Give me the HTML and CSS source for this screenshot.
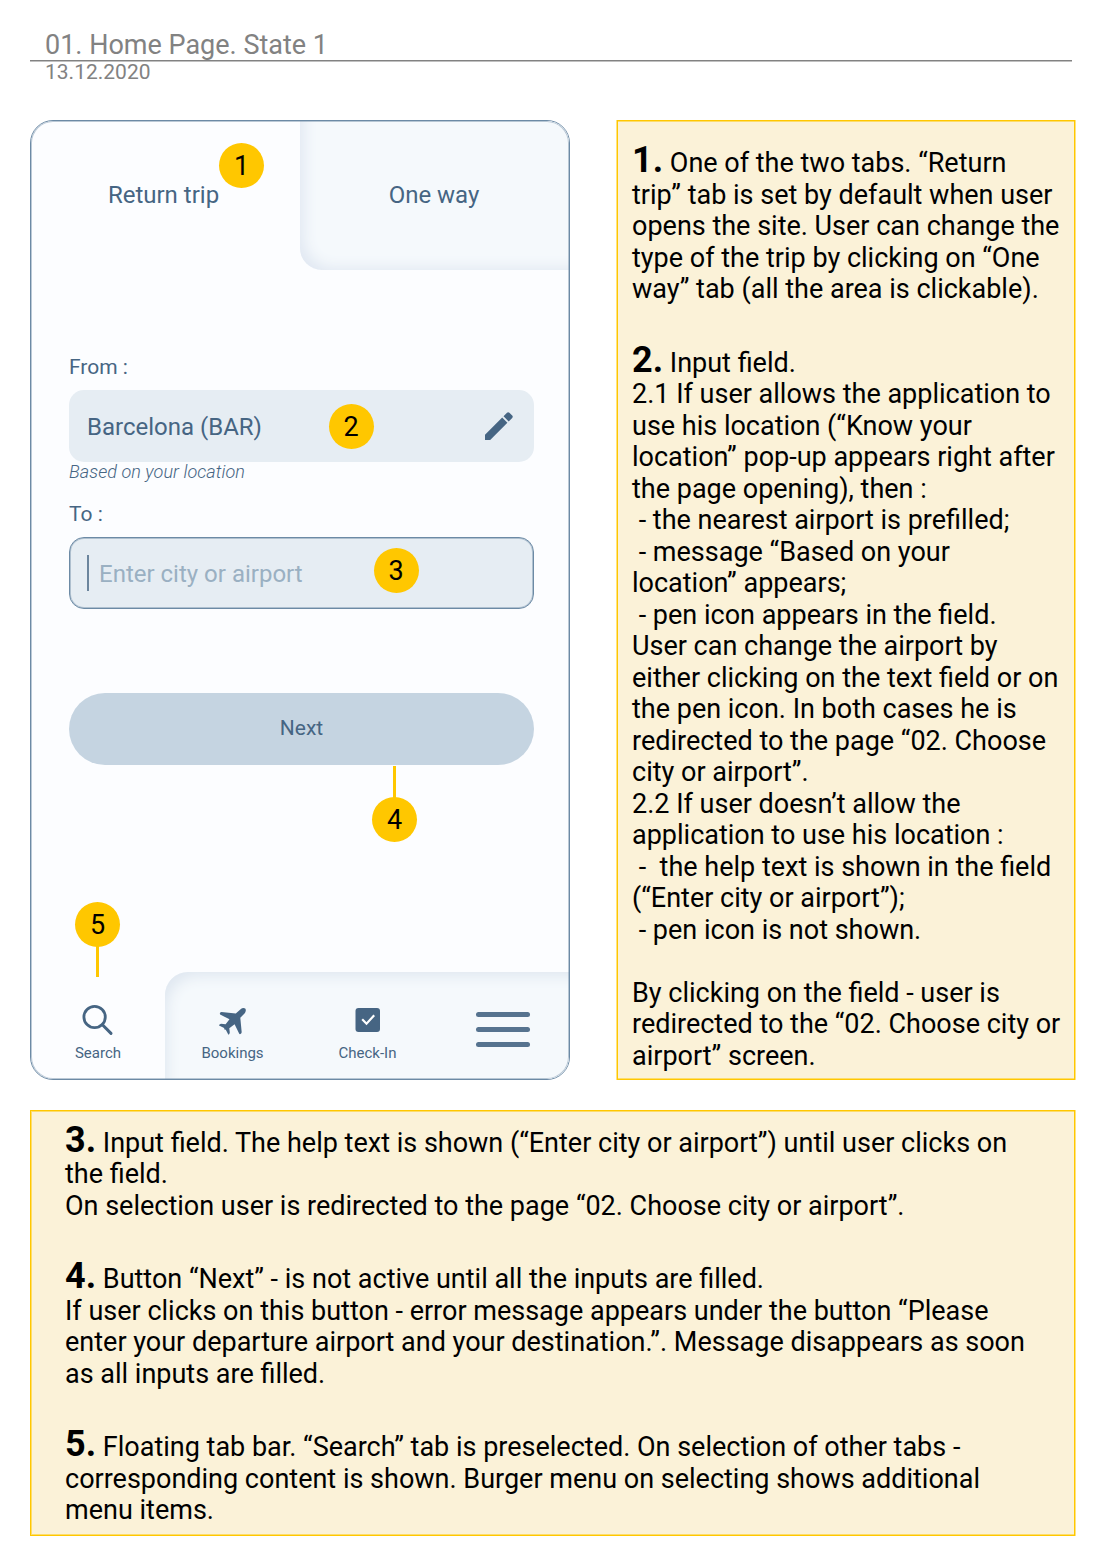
FILE: index.html
```html
<!DOCTYPE html>
<html lang="en">
<head>
<meta charset="utf-8">
<title>01. Home Page. State 1</title>
<link rel="stylesheet" href="styles.css">
</head>
<body>
<main class="sheet">
  <header class="sheet-head">
    <h1 class="title">01. Home Page. State 1</h1>
    <p class="date">13.12.2020</p>
  </header>

  <div class="top-row">
    <section class="phone">
      <nav class="trip-tabs">
        <div class="trip-tab">Return trip</div>
        <div class="trip-tab inactive">One way</div>
      </nav>
      <form class="search-form">
        <label class="label">From :</label>
        <div class="field">
          <span>Barcelona (BAR)</span>
          <svg class="pen" viewBox="0 0 28 28"><path d="M0 28v-5.200L17.200 5.600l5.200 5.200L5.200 28zM18.500 4.300L22 .8q1.200-1.100 2.400 0l2.800 2.800q1.100 1.200 0 2.400l-3.500 3.500z"/></svg>
        </div>
        <p class="hint">Based on your location</p>
        <label class="label">To :</label>
        <div class="field focused"><i class="caret"></i><span class="placeholder">Enter city or airport</span></div>
        <div class="next">Next</div>
      </form>
      <nav class="tab-bar">
        <div class="tab current">
          <svg class="icon" viewBox="0 0 32 32"><circle cx="12.600" cy="13" r="10.700" fill="none" stroke="#466583" stroke-width="2.800"/><path d="M20.400 20.800L29 29.400" stroke="#466583" stroke-width="3" stroke-linecap="round"/></svg>
          <span>Search</span>
        </div>
        <div class="tab-rest">
          <div class="tab">
            <svg class="icon" viewBox="0 0 32 32"><path d="M23.600 5.200C25 3.900 27.200 3.600 28.200 4.600s.8 3.300-.7 4.900L23.300 13.800 24.700 28.200Q24.500 29.900 23 30.200 22.400 30.200 22.100 29.600L17.600 20.300 12.300 24.300 12.800 28.600Q12.600 30.400 11.400 30.800L8.800 25.800 7.400 25.600 7.100 24 2 21.400Q2 20.200 4 19.700L8.600 20.300 12.500 15.300 3.100 10.500Q2.200 8.300 4.400 7.900L18.800 9.600z"/></svg>
            <span>Bookings</span>
          </div>
          <div class="tab">
            <svg class="icon" viewBox="0 0 32 32"><rect x="3.500" y="4" width="24.500" height="24" rx="3"/><path d="M10.200 15.300l4.300 4.400 7.700-8.400" fill="none" stroke="#fff" stroke-width="2.200"/></svg>
            <span>Check-In</span>
          </div>
          <div class="burger"><i></i><i></i><i></i></div>
        </div>
      </nav>
      <b class="badge b1">1</b>
      <b class="badge b2">2</b>
      <b class="badge b3">3</b>
      <b class="badge b4">4</b>
      <b class="badge b5">5</b>
    </section>

    <aside class="notes side">
      <p><strong>1.</strong> One of the two tabs. “Return<br>trip” tab is set by default when user<br>opens the site. User can change the<br>type of the trip by clicking on “One<br>way” tab (all the area is clickable).</p>
      <p><strong>2.</strong> Input field.<br>2.1 If user allows the application to<br>use his location (“Know your<br>location” pop-up appears right after<br>the page opening), then :<br>&nbsp;- the nearest airport is prefilled;<br>&nbsp;- message “Based on your<br>location” appears;<br>&nbsp;- pen icon appears in the field.<br>User can change the airport by<br>either clicking on the text field or on<br>the pen icon. In both cases he is<br>redirected to the page “02. Choose<br>city or airport”.<br>2.2 If user doesn’t allow the<br>application to use his location :<br>&nbsp;-&nbsp; the help text is shown in the field<br>(“Enter city or airport”);<br>&nbsp;- pen icon is not shown.<br><br>By clicking on the field - user is<br>redirected to the “02. Choose city or<br>airport” screen.</p>
    </aside>
  </div>

  <section class="notes wide">
    <p><strong>3.</strong> Input field. The help text is shown (“Enter city or airport”) until user clicks on<br>the field.<br>On selection user is redirected to the page “02. Choose city or airport”.</p>
    <p><strong>4.</strong> Button “Next” - is not active until all the inputs are filled.<br>If user clicks on this button - error message appears under the button “Please<br>enter your departure airport and your destination.”. Message disappears as soon<br>as all inputs are filled.</p>
    <p><strong>5.</strong> Floating tab bar. “Search” tab is preselected. On selection of other tabs -<br>corresponding content is shown. Burger menu on selecting shows additional<br>menu items.</p>
  </section>
</main>
</body>
</html>
```
FILE: styles.css
```css
* { box-sizing: border-box; }
body { margin: 0; background: #fff; font-family: Roboto, sans-serif; color: #000; }
h1, p { margin: 0; font-weight: 400; }

.sheet { width: 1106px; height: 1567px; padding: 29px 30px 0; overflow: hidden; }
.sheet-head { width: 1042px; height: 91px; color: #828282; }
.title { height: 32px; padding-left: 15px; font-size: 27px; line-height: 32px; border-bottom: 1px solid #828282; box-shadow: 0 1px #c0c0c0; }
.date { padding-left: 15px; font-size: 21px; line-height: 23px; }

.top-row { display: flex; gap: 47px; height: 960px; }

.phone { position: relative; display: flex; flex-direction: column; width: 540px; height: 960px; border: 1px solid #6c8aa5; border-radius: 23px; background: #fcfdff; color: #466583; overflow: hidden; }
.phone::after { content: ""; position: absolute; inset: 0; border-radius: 22px; box-shadow: inset 0 0 0 1px rgba(108, 138, 165, .45); pointer-events: none; }

.trip-tabs { display: flex; height: 149px; font-size: 24px; line-height: 28px; }
.trip-tab { width: 269px; padding: 60px 4px 0 0; text-align: center; }
.trip-tab.inactive { padding: 60px 1px 0 0; border-radius: 0 0 0 22px; background: #f5f9fc; box-shadow: inset 12px -10px 14px -8px #e1e8f2; }

.search-form { display: flex; flex-direction: column; width: 465px; margin: 84px 0 0 38px; }
.label { height: 36px; font-size: 21px; line-height: 26px; }
.field { display: flex; align-items: center; justify-content: space-between; height: 72px; padding: 0 21px 0 18px; border-radius: 15px; background: #e6edf3; font-size: 24px; }
.field span { padding-top: 2px; }
.pen { width: 28px; height: 28px; fill: #466583; }
.hint { height: 39px; font-size: 18px; line-height: 20px; font-style: italic; font-weight: 300; letter-spacing: .07px; }
.field.focused { justify-content: flex-start; gap: 10px; padding-left: 17px; border: 1px solid #6c8aa5; box-shadow: inset 0 0 0 1px rgba(108, 138, 165, .45); }
.caret { width: 2px; height: 36px; background: #6c859d; }
.placeholder { color: #9ab0c2; }
.next { height: 72px; margin-top: 84px; border-radius: 36px; background: #c5d4e1; font-size: 21px; line-height: 71px; text-align: center; }

.tab-bar { display: flex; height: 107px; margin-top: auto; font-size: 15px; line-height: 18px; }
.tab { display: flex; flex-direction: column; align-items: center; gap: 8px; width: 135px; padding-top: 32px; }
.tab.current { width: 134px; }
.tab-rest { display: flex; flex: 1; border-radius: 23px 0 0 0; background: #f5f9fc; box-shadow: inset 10px 12px 14px -8px #dfe7f0; }
.icon { width: 32px; height: 32px; fill: #466583; }
.burger { display: flex; flex-direction: column; gap: 10px; width: 54px; margin: 40px 0 0 41px; }
.burger i { height: 5px; border-radius: 3px; background: #56738f; }

.badge { position: absolute; width: 45px; height: 45px; border-radius: 50%; background: #ffc700; color: #000; font-size: 27px; font-weight: 400; line-height: 46px; text-align: center; }
.b1 { left: 188px; top: 21.5px; }
.b2 { left: 297.5px; top: 282.5px; }
.b3 { left: 342.5px; top: 426.5px; }
.b4 { left: 341px; top: 675.5px; }
.b5 { left: 44px; top: 780.5px; }
.b4::before, .b5::before { content: ""; position: absolute; left: 21px; width: 3px; height: 32px; background: #ffc700; }
.b4::before { bottom: 44px; }
.b5::before { top: 43px; }

.notes { background: #fbf2d8; border: 1px solid #ffc700; font-size: 27px; line-height: 31.5px; white-space: nowrap; }
.notes p + p { margin-top: 42px; }
.notes strong { font-size: 36px; line-height: 0; }
.side { width: 458px; padding: 27px 0 0 14px; box-shadow: -1px 0 #ffe37f, 1px 0 #ffe37f, inset 0 1px #fddd6c, inset 0 -1px #fddd6c; }
.wide { width: 1045px; height: 426px; margin-top: 30px; padding: 16.500px 0 0 34px; box-shadow: 1px 0 #ffe37f, inset 1px 1px #fddd6c, inset 0 -1px #fddd6c; }
```
